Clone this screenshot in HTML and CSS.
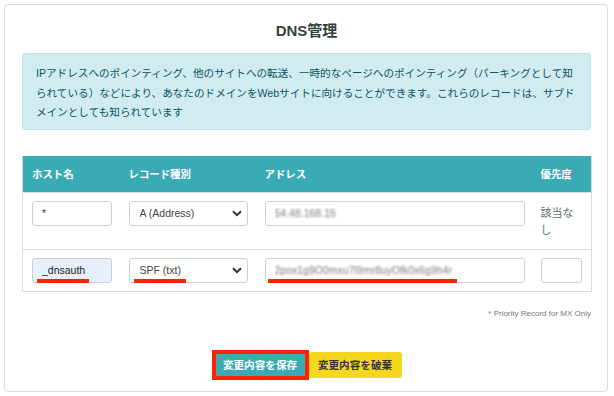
FILE: index.html
```html
<!DOCTYPE html>
<html lang="ja">
<head>
  <meta charset="UTF-8">
  <meta name="viewport" content="width=device-width, initial-scale=1.0">
  <title>DNS管理</title>
  <link rel="stylesheet" href="styles.css">
</head>
<body>
  <div class="dns-card">
    <!-- Heading -->
    <h1 class="dns-title">DNS管理</h1>

    <div class="info-box">
      IPアドレスへのポインティング、他のサイトへの転送、一時的なページへのポインティング（パーキングとして知られている）などにより、あなたのドメインをWebサイトに向けることができます。これらのレコードは、サブドメインとしても知られています
    </div>

    <!-- Records table -->
    <table class="dns-table">
      <colgroup>
        <col class="col-host">
        <col class="col-type">
        <col class="col-address">
        <col class="col-priority">
      </colgroup>
      <thead>
        <tr>
          <th>ホスト名</th>
          <th>レコード種別</th>
          <th>アドレス</th>
          <th>優先度</th>
        </tr>
      </thead>
      <tbody>
        <tr>
          <td>
            <div class="field host-field">
              <input type="text" class="text-input" value="*">
            </div>
          </td>
          <td>
            <div class="field type-field">
              <select class="select-input">
                <option>A (Address)</option>
              </select>
              <svg class="chevron" width="10" height="7" viewBox="0 0 10 7"><path d="M1 1.2 5 5.2 9 1.2" fill="none" stroke="#333" stroke-width="2"/></svg>
            </div>
          </td>
          <td>
            <div class="field address-field">
              <input type="text" class="text-input masked" value="54.48.168.15">
            </div>
          </td>
          <td class="priority-none">該当なし</td>
        </tr>
        <tr>
          <td>
            <div class="field host-field">
              <input type="text" class="text-input autofilled" value="_dnsauth">
              <span class="mark mark-host"></span>
            </div>
          </td>
          <td>
            <div class="field type-field">
              <select class="select-input">
                <option>SPF (txt)</option>
              </select>
              <svg class="chevron" width="10" height="7" viewBox="0 0 10 7"><path d="M1 1.2 5 5.2 9 1.2" fill="none" stroke="#333" stroke-width="2"/></svg>
              <span class="mark mark-type"></span>
            </div>
          </td>
          <td>
            <div class="field address-field">
              <input type="text" class="text-input masked" value="2pox1g9O0mxu7l9mr8uyOfk0x6g9h4r">
              <span class="mark mark-address"></span>
            </div>
          </td>
          <td>
            <div class="field priority-field">
              <input type="text" class="text-input" value="">
            </div>
          </td>
        </tr>
      </tbody>
    </table>

    <p class="note-text">* Priority Record for MX Only</p>

    <div class="button-row">
      <button type="button" class="btn btn-save">変更内容を保存</button>
      <button type="button" class="btn btn-discard">変更内容を破棄</button>
    </div>
  </div>
</body>
</html>
```

FILE: styles.css
```css
body {
  margin: 0;
  padding: 4px 0 0 4px;
  font-family: 'Liberation Sans', 'Noto Sans CJK JP', sans-serif;
  background: #fff;
  color: #333;
}

.dns-card {
  width: 604px;
  box-sizing: border-box;
  padding: 16px 16px 11px 17px;
  border: 1px solid #dcdcdc;
  border-radius: 4px;
}

.dns-title {
  margin: 0;
  font-size: 15px;
  line-height: 20px;
  font-weight: bold;
  text-align: center;
  color: #353f40;
}

.info-box {
  margin-top: 12px;
  padding: 10px 14px 6px 13px;
  background: #d1ecf1;
  border: 1px solid #bee5eb;
  border-radius: 3px;
  color: #0c5460;
  font-size: 10.6px;
  line-height: 19.5px;
}

.dns-table {
  width: 569px;
  margin-top: 26px;
  border-collapse: collapse;
  table-layout: fixed;
  border: 1px solid #dcdcdc;
  border-top: none;
  font-size: 10.5px;
}

.col-host { width: 97px; }
.col-type { width: 136px; }
.col-address { width: 276px; }
.col-priority { width: 60px; }

.dns-table th {
  height: 36px;
  padding: 0 9px;
  background: #3aabb5;
  color: #fff;
  font-weight: bold;
  font-size: 10.4px;
  text-align: left;
}

.dns-table td {
  padding: 8px 9px;
  vertical-align: top;
  border-top: 1px solid #dcdcdc;
}

.field {
  position: relative;
}

.host-field { width: 80px; }
.type-field { width: 119px; }
.address-field { width: 260px; }
.priority-field { width: 41px; }

.text-input,
.select-input {
  display: block;
  width: 100%;
  height: 25px;
  box-sizing: border-box;
  padding: 0 9px;
  border: 1px solid #cfcfcf;
  border-radius: 3px;
  background: #fff;
  font-family: 'Liberation Sans', sans-serif;
  font-size: 10.5px;
  color: #444;
  outline: none;
}

.select-input {
  appearance: none;
  -webkit-appearance: none;
  padding: 0 10px;
}

.chevron {
  position: absolute;
  right: 6px;
  top: 9px;
  pointer-events: none;
}

.text-input.autofilled {
  background: #e8f0fe;
  color: #222;
}

.text-input.masked {
  color: transparent;
  text-shadow: 0 0 2.5px rgba(90, 90, 90, 0.8);
}

.priority-none {
  padding-top: 11px !important;
  padding-bottom: 11px !important;
  font-family: 'Noto Sans CJK JP', sans-serif;
  font-size: 11px;
  line-height: 17px;
  color: #5f6d6d;
}

.mark {
  position: absolute;
  bottom: 0;
  height: 4px;
  background: #ff2200;
}

.mark-host { left: 5px; width: 52px; }
.mark-type { left: 5px; width: 52px; }
.mark-address { left: 3px; width: 189px; }

.note-text {
  margin: 17px 0 0;
  text-align: right;
  font-size: 8px;
  line-height: 10px;
  color: #777;
}

.button-row {
  display: flex;
  justify-content: center;
  align-items: center;
  margin-top: 31px;
}

.btn {
  font-family: 'Noto Sans CJK JP', sans-serif;
  font-size: 10.6px;
  font-weight: bold;
  border: none;
  border-radius: 3px;
  cursor: pointer;
  padding: 0;
}

.btn-save {
  width: 97px;
  height: 30px;
  background: #3aabb5;
  color: #fff;
  border: 4px solid #ff2200;
  border-radius: 0;
}

.btn-discard {
  width: 93px;
  height: 26px;
  background: #f5d81e;
  color: #333;
}
```
